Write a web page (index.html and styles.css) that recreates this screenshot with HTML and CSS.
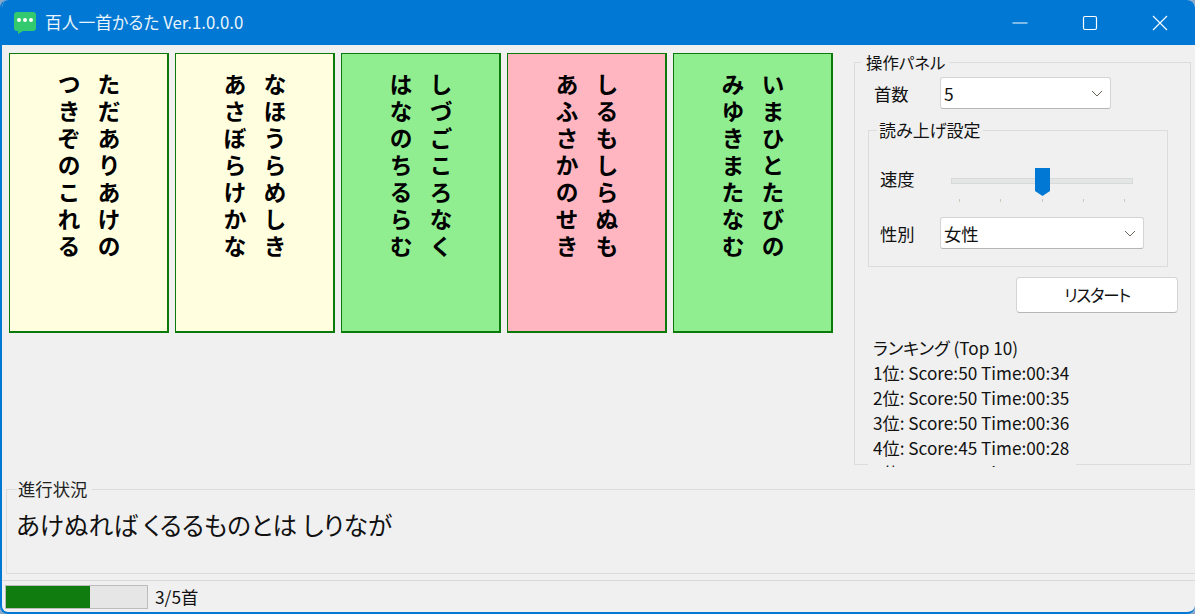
FILE: index.html
```html
<!DOCTYPE html>
<html lang="ja">
<head>
<meta charset="utf-8">
<title>百人一首かるた</title>
<link rel="stylesheet" href="styles.css">
</head>
<body>
<div class="window">
  <header class="titlebar">
    <svg class="app-icon" width="22" height="22" viewBox="0 0 22 22"><path d="M3 0h16a3 3 0 0 1 3 3v13a3 3 0 0 1-3 3H9l-5 3v-3H3a3 3 0 0 1-3-3V3a3 3 0 0 1 3-3z" fill="#33c96f"/><circle cx="5" cy="8" r="2" fill="#fff"/><circle cx="11" cy="8" r="2" fill="#fff"/><circle cx="17" cy="8" r="2" fill="#fff"/></svg>
    <span class="title">百人一首かるた Ver.1.0.0.0</span>
    <div class="controls">
      <svg class="ctl" width="16" height="16" viewBox="0 0 16 16"><path d="M0.500 8h15" stroke="#fff" stroke-width="1" fill="none"/></svg>
      <svg class="ctl" width="16" height="16" viewBox="0 0 16 16"><rect x="1.500" y="1.500" width="13" height="13" rx="1.500" stroke="#fff" stroke-width="1.200" fill="none"/></svg>
      <svg class="ctl" width="16" height="16" viewBox="0 0 16 16"><path d="M1 1l14 14M15 1L1 15" stroke="#fff" stroke-width="1.100" fill="none"/></svg>
    </div>
  </header>
  <div class="content">
    <section class="cards">
      <div class="card plain"><p>ただありあけの<br>つきぞのこれる</p></div>
      <div class="card plain"><p>なほうらめしき<br>あさぼらけかな</p></div>
      <div class="card good"><p>しづごころなく<br>はなのちるらむ</p></div>
      <div class="card bad"><p>しるもしらぬも<br>あふさかのせき</p></div>
      <div class="card good"><p>いまひとたびの<br>みゆきまたなむ</p></div>
    </section>
    <aside class="panel-wrap">
      <fieldset class="panel">
        <legend>操作パネル</legend>
        <div class="count-row">
          <span class="count-label">首数</span>
          <div class="select count-select"><span>5</span><svg width="12" height="7" viewBox="0 0 12 7"><path d="M1 1l5 5 5-5" stroke="#6b6258" fill="none"/></svg></div>
        </div>
        <fieldset class="voice">
          <legend>読み上げ設定</legend>
          <div class="speed-row">
            <span class="voice-label">速度</span>
            <div class="slider">
              <div class="track"></div>
              <svg class="thumb" width="15" height="28" viewBox="0 0 15 28"><path d="M0 0h15v23l-7.500 5L0 23z" fill="#0078d4"/></svg>
              <div class="ticks"><i></i><i></i><i></i><i></i><i></i></div>
            </div>
          </div>
          <div class="gender-row">
            <span class="voice-label">性別</span>
            <div class="select gender-select"><span>女性</span><svg width="12" height="7" viewBox="0 0 12 7"><path d="M1 1l5 5 5-5" stroke="#6b6258" fill="none"/></svg></div>
          </div>
        </fieldset>
        <div class="button-row"><button class="restart">リスタート</button></div>
        <div class="ranking">
          <div>ランキング (Top 10)</div>
          <div>1位: Score:50 Time:00:34</div>
          <div>2位: Score:50 Time:00:35</div>
          <div>3位: Score:50 Time:00:36</div>
          <div>4位: Score:45 Time:00:28</div>
          <div>5位: Score:45 Time:00:30</div>
        </div>
      </fieldset>
    </aside>
  </div>
  <fieldset class="progress">
    <legend>進行状況</legend>
    <div class="reading">あけぬれば くるるものとは しりなが</div>
  </fieldset>
  <footer class="status">
    <div class="bar"><div class="fill" style="width:59.500%"></div></div>
    <span>3/5首</span>
  </footer>
</div>
</body>
</html>
```

FILE: styles.css
```css
* { box-sizing: border-box; }
html, body { margin: 0; padding: 0; height: 100%; background: #8aa9c9; overflow: hidden; }
body { font-family: "Noto Sans CJK JP", "Noto Sans", sans-serif; color: #111; font-size: 17.330px; font-feature-settings: "palt"; }
.window { width: 1195px; height: 614px; display: flex; flex-direction: column; background: #f0f0f0; border-left: 2px solid #0078d4; border-bottom: 2px solid #0078d4; border-radius: 8px; overflow: hidden; }
.titlebar { height: 45px; flex: none; background: #0078d4; display: flex; align-items: center; color: #eaf4fb; margin-left: -2px; padding-left: 14px; }
.app-icon { flex: none; }
.title { margin-left: 9px; font-size: 16.800px; line-height: 22px; position: relative; top: -1px; }
.controls { margin-left: auto; display: flex; gap: 54px; padding-right: 27px; }
.content { height: 430px; flex: none; display: flex; }
.cards { width: 852px; padding: 8px 0 0 7px; display: flex; gap: 6px; align-items: flex-start; }
.card { width: 160px; height: 280px; border: solid #0b7a0b; border-width: 1px 2px 2px 1px; display: flex; justify-content: center; padding-top: 19px; padding-left: 1px; }
.plain { background: #ffffe0; }
.good { background: #90ee90; }
.bad { background: #ffb6c1; }
.card p { margin: 0; writing-mode: vertical-rl; font-size: 23px; font-weight: 700; line-height: 40px; letter-spacing: 4px; color: #000; font-family: "Noto Sans CJK JP", sans-serif; font-feature-settings: normal; }
.panel-wrap { flex: 1; padding: 6px 4px 0 0; min-width: 0; }
.panel { margin: 0; padding: 0 12px 0 13px; height: 414px; border: 1px solid #dcdcdc; position: relative; min-width: 0; overflow: visible; }
.panel > legend { margin-left: -7px; padding: 0 5px; font-size: 16.400px; line-height: 22px; }
.count-row { display: flex; align-items: center; height: 32px; margin-top: 4px; }
.count-label { width: 72px; padding-left: 6px; }
.select { background: #fff; border: 1px solid #d4d4d4; border-bottom-color: #b5b5b5; border-radius: 3px; height: 32px; display: flex; align-items: center; justify-content: space-between; padding: 0 7px 0 3px; }
.count-select { width: 171px; }
.gender-select { width: 204px; }
.voice { margin: 10px 10px 0 0; padding: 0 0 0 11px; height: 148px; border: 1px solid #dcdcdc; min-width: 0; }
.voice legend { margin-left: -3px; padding: 0 2px; font-size: 17px; line-height: 22px; }
.speed-row { display: flex; align-items: center; height: 40px; margin-top: 17px; }
.voice-label { width: 60px; }
.slider { width: 182px; height: 40px; position: relative; margin-left: 11px; }
.track { position: absolute; left: 0; right: 0; top: 20px; height: 6px; background: #e3e6e4; border: 1px solid #d6dbd8; }
.thumb { position: absolute; left: 84px; top: 10px; }
.ticks { position: absolute; left: 8px; right: 8px; top: 41px; display: flex; justify-content: space-between; }
.ticks i { width: 1px; height: 3px; background: #c9c9b8; }
.gender-row { display: flex; align-items: center; height: 32px; margin-top: 19px; }
.button-row { display: flex; justify-content: flex-end; margin-top: 10px; }
.restart { width: 162px; height: 36px; background: #fff; border: 1px solid #d4d4d4; border-bottom-color: #b5b5b5; border-radius: 4px; font-family: inherit; font-size: 16.500px; letter-spacing: -1.200px; font-feature-settings: "palt"; color: #111; padding: 0; }
.ranking { margin-top: 22px; width: 208px; height: 132px; overflow: hidden; background: #f0f0f0; padding-left: 5px; font-size: 17.200px; line-height: 25px; position: relative; white-space: nowrap; }
.progress { flex: none; margin: 3px 0 0 4px; height: 96px; padding: 0 0 0 10px; border: 1px solid #dcdcdc; border-right: none; min-width: 0; }
.progress legend { padding: 0 5px 0 1px; line-height: 22px; color: #222; }
.reading { font-size: 24.600px; line-height: 38px; margin-top: 5px; color: #111; margin-left: -1px; }
.status { flex: 1; margin-top: 6px; border-top: 1px solid #d8d8d8; display: flex; align-items: center; padding: 0 0 0 3px; gap: 7px; }
.bar { width: 143px; height: 24px; background: #e6e6e6; border: 1px solid #bcbcbc; }
.fill { height: 100%; background: #107c10; }
```
